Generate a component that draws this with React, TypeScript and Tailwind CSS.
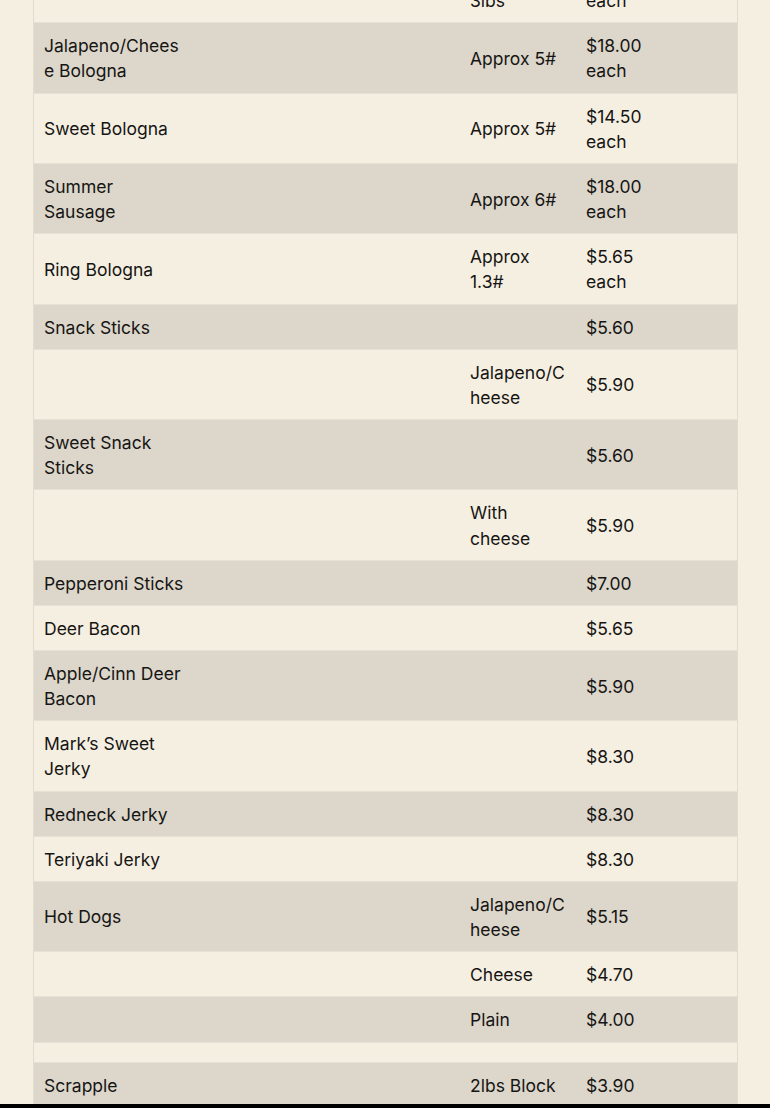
type Item = { name: string; size: string; price: string };

const ITEMS: Item[] = [
  { name: "Garlic Bologna", size: "Approx 3lbs", price: "$12.00 each" },
  { name: "Jalapeno/Cheese Bologna", size: "Approx 5#", price: "$18.00 each" },
  { name: "Sweet Bologna", size: "Approx 5#", price: "$14.50 each" },
  { name: "Summer Sausage", size: "Approx 6#", price: "$18.00 each" },
  { name: "Ring Bologna", size: "Approx 1.3#", price: "$5.65 each" },
  { name: "Snack Sticks", size: "", price: "$5.60" },
  { name: "", size: "Jalapeno/Cheese", price: "$5.90" },
  { name: "Sweet Snack Sticks", size: "", price: "$5.60" },
  { name: "", size: "With cheese", price: "$5.90" },
  { name: "Pepperoni Sticks", size: "", price: "$7.00" },
  { name: "Deer Bacon", size: "", price: "$5.65" },
  { name: "Apple/Cinn Deer Bacon", size: "", price: "$5.90" },
  { name: "Mark’s Sweet Jerky", size: "", price: "$8.30" },
  { name: "Redneck Jerky", size: "", price: "$8.30" },
  { name: "Teriyaki Jerky", size: "", price: "$8.30" },
  { name: "Hot Dogs", size: "Jalapeno/Cheese", price: "$5.15" },
  { name: "", size: "Cheese", price: "$4.70" },
  { name: "", size: "Plain", price: "$4.00" },
  { name: "", size: "", price: "" },
  { name: "Scrapple", size: "2lbs Block", price: "$3.90" },
  { name: "", size: "", price: "" },
];

export default function App() {
  return (
    <div className="min-h-screen bg-[#f5efe2] pl-[33px] pr-[32px] font-['Inter','Liberation_Sans',sans-serif] text-[17.5px] leading-[25.15px] text-[#161513]">
      <div className="-mt-[47px] border-x border-[#e2dccf]">
        <table className="w-full table-fixed border-separate border-spacing-0">
          <colgroup>
            <col className="w-[160px]" />
            <col />
            <col className="w-[116px]" />
            <col className="w-[100px]" />
            <col className="w-[61px]" />
          </colgroup>
          <tbody>
            {ITEMS.map((item, i) => {
              const shade = i % 2 === 1 ? "bg-[#dcd6cb]" : "bg-[#f5efe2]";
              const cell = `px-[10px] py-[10px] align-middle break-words shadow-[inset_0_-1px_0_#e7e1d5] ${shade}`;
              return (
                <tr key={i}>
                  <td className={cell}>{item.name}</td>
                  <td className={cell}></td>
                  <td className={cell}>{item.size}</td>
                  <td className={cell}>{item.price}</td>
                  <td className={cell}></td>
                </tr>
              );
            })}
          </tbody>
        </table>
      </div>
      <div className="fixed inset-x-0 bottom-0 h-[4px] bg-black" />
    </div>
  );
}
